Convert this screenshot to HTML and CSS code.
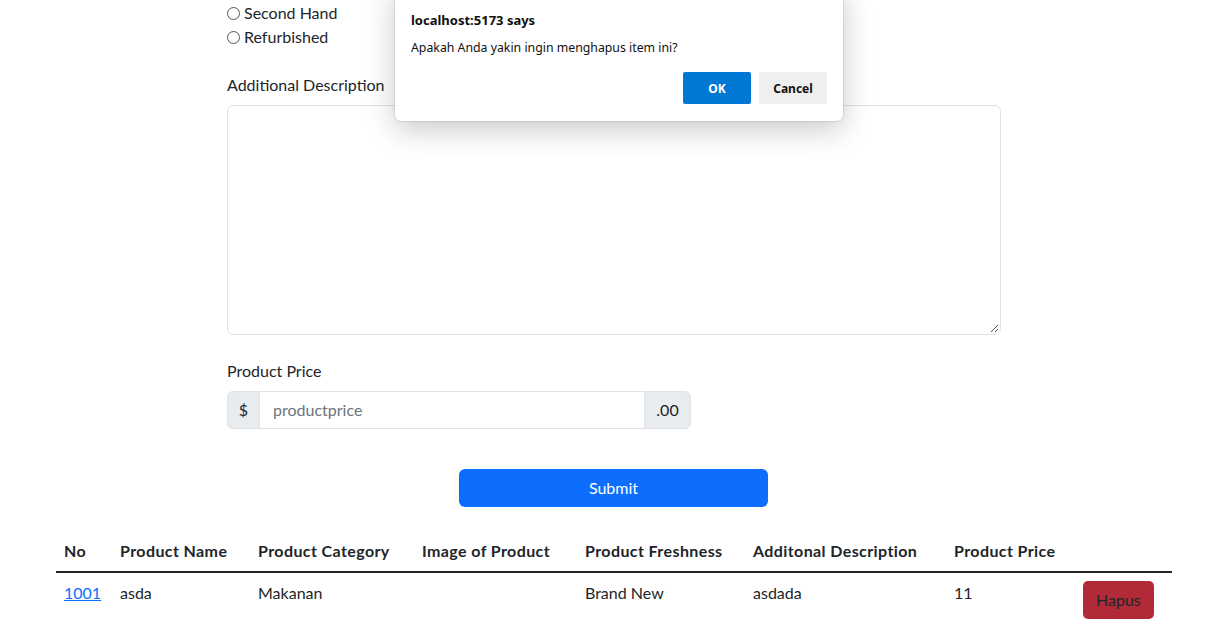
FILE: index.html
```html
<!DOCTYPE html>
<html lang="en">
<head>
<meta charset="utf-8">
<title>Product</title>
<link rel="stylesheet" href="styles.css">
</head>
<body>
<div class="page">
  <form class="form">
    <div class="radio-group">
      <label class="radio"><span class="radio-dot"></span>Second Hand</label>
      <label class="radio"><span class="radio-dot"></span>Refurbished</label>
    </div>
    <div class="field field-desc">
      <label class="label">Additional Description</label>
      <div class="textarea"><span class="grip"></span></div>
    </div>
    <div class="field field-price">
      <label class="label">Product Price</label>
      <div class="input-group">
        <span class="addon addon-left">$</span>
        <span class="input">productprice</span>
        <span class="addon addon-right">.00</span>
      </div>
    </div>
    <div class="submit-row">
      <button type="button" class="btn-submit">Submit</button>
    </div>
  </form>

  <table class="table">
    <colgroup>
      <col style="width:56px"><col style="width:138px"><col style="width:164px"><col style="width:163px"><col style="width:168px"><col style="width:201px"><col style="width:129px"><col style="width:97px">
    </colgroup>
    <thead>
      <tr>
        <th>No</th><th>Product Name</th><th>Product Category</th><th>Image of Product</th><th>Product Freshness</th><th>Additonal Description</th><th>Product Price</th><th></th>
      </tr>
    </thead>
    <tbody>
      <tr>
        <td><a href="#" class="link">1001</a></td><td>asda</td><td>Makanan</td><td></td><td>Brand New</td><td>asdada</td><td>11</td><td><button type="button" class="btn-danger">Hapus</button></td>
      </tr>
    </tbody>
  </table>
</div>

<div class="dialog">
  <div class="dialog-title">localhost:5173 says</div>
  <div class="dialog-msg">Apakah Anda yakin ingin menghapus item ini?</div>
  <div class="dialog-actions">
    <button type="button" class="dlg-btn dlg-ok">OK</button>
    <button type="button" class="dlg-btn dlg-cancel">Cancel</button>
  </div>
</div>
</body>
</html>
```
FILE: styles.css
```css
* { box-sizing: border-box; }
html, body { margin: 0; padding: 0; }
body {
  font-family: Lato, "Noto Sans", sans-serif;
  font-size: 16px;
  line-height: 24px;
  color: #212529;
  background: #fff;
  overflow: hidden;
  width: 1207px;
  height: 627px;
  position: relative;
}
.page { padding-top: 1px; }
.form {
  width: 774px;
  margin-left: 227px;
  display: flex;
  flex-direction: column;
}
.radio-group { display: flex; flex-direction: column; }
.radio { display: flex; align-items: center; height: 24px; }
.radio-dot {
  width: 13px; height: 13px;
  border: 1px solid #555;
  border-radius: 50%;
  margin-right: 4px;
  margin-left: 0;
}
.field { display: flex; flex-direction: column; }
.field-desc { margin-top: 24px; }
.label { display: block; margin-bottom: 8px; }
.textarea {
  height: 230px;
  border: 1px solid #dee2e6;
  border-radius: 6px;
  position: relative;
}
.grip {
  position: absolute; right: 2px; bottom: 2px;
  width: 7px; height: 7px;
  background: linear-gradient(135deg, transparent 45%, #555 45%, #555 55%, transparent 55%, transparent 75%, #555 75%, #555 85%, transparent 85%);
}
.field-price { margin-top: 24px; }
.input-group {
  display: flex;
  width: 464px;
  height: 38px;
}
.addon {
  display: flex; align-items: center; justify-content: center;
  background: #e9ecef;
  border: 1px solid #dee2e6;
  color: #212529;
}
.addon-left { width: 33px; border-radius: 6px 0 0 6px; }
.addon-right { width: 47px; border-radius: 0 6px 6px 0; }
.input {
  flex: 1;
  display: flex; align-items: center;
  padding-left: 13px;
  border-top: 1px solid #dee2e6;
  border-bottom: 1px solid #dee2e6;
  color: #6c757d;
}
.submit-row { display: flex; justify-content: center; margin-top: 40px; }
.btn-submit {
  width: 309px; height: 38px;
  background: #0d6efd;
  color: #fff;
  border: none;
  border-radius: 6px;
  font: inherit;
  margin-right: 1px;
}
.table {
  margin-top: 24px;
  margin-left: 56px;
  width: 1116px;
  border-collapse: collapse;
  table-layout: fixed;
}
.table th {
  text-align: left;
  font-weight: 700;
  letter-spacing: 0.4px;
  padding: 8px;
  border-bottom: 2px solid #212529;
  white-space: nowrap;
}
.table td { padding: 8px; vertical-align: top; white-space: nowrap; }
.link { color: #0d6efd; text-decoration: underline; }
.btn-danger {
  font: inherit;
  height: 38px;
  padding: 0 13px;
  background: #b02a37;
  color: #212529;
  border: none;
  border-radius: 5px;
}
.dialog {
  position: absolute;
  left: 395px; top: -15px;
  width: 448px;
  padding: 18px 16px 17px 16px;
  background: #fff;
  border-radius: 6px;
  box-shadow: 0 8px 30px rgba(0,0,0,0.22), 0 0 2px rgba(0,0,0,0.25);
  font-family: "Noto Sans", sans-serif;
  font-size: 12.3px;
  color: #111;
}
.dialog-title { font-weight: 700; font-size: 13px; line-height: 18px; margin-top: 8px; }
.dialog-msg { line-height: 18px; margin-top: 10px; }
.dialog-actions { display: flex; justify-content: flex-end; gap: 8px; margin-top: 15px; }
.dlg-btn {
  width: 68px; height: 32px;
  border: none; border-radius: 2px;
  font-family: "Noto Sans", sans-serif; font-size: 12px; font-weight: 700;
}
.dlg-ok { background: #0078d4; color: #fff; }
.dlg-cancel { background: #efefef; color: #111; }
```
